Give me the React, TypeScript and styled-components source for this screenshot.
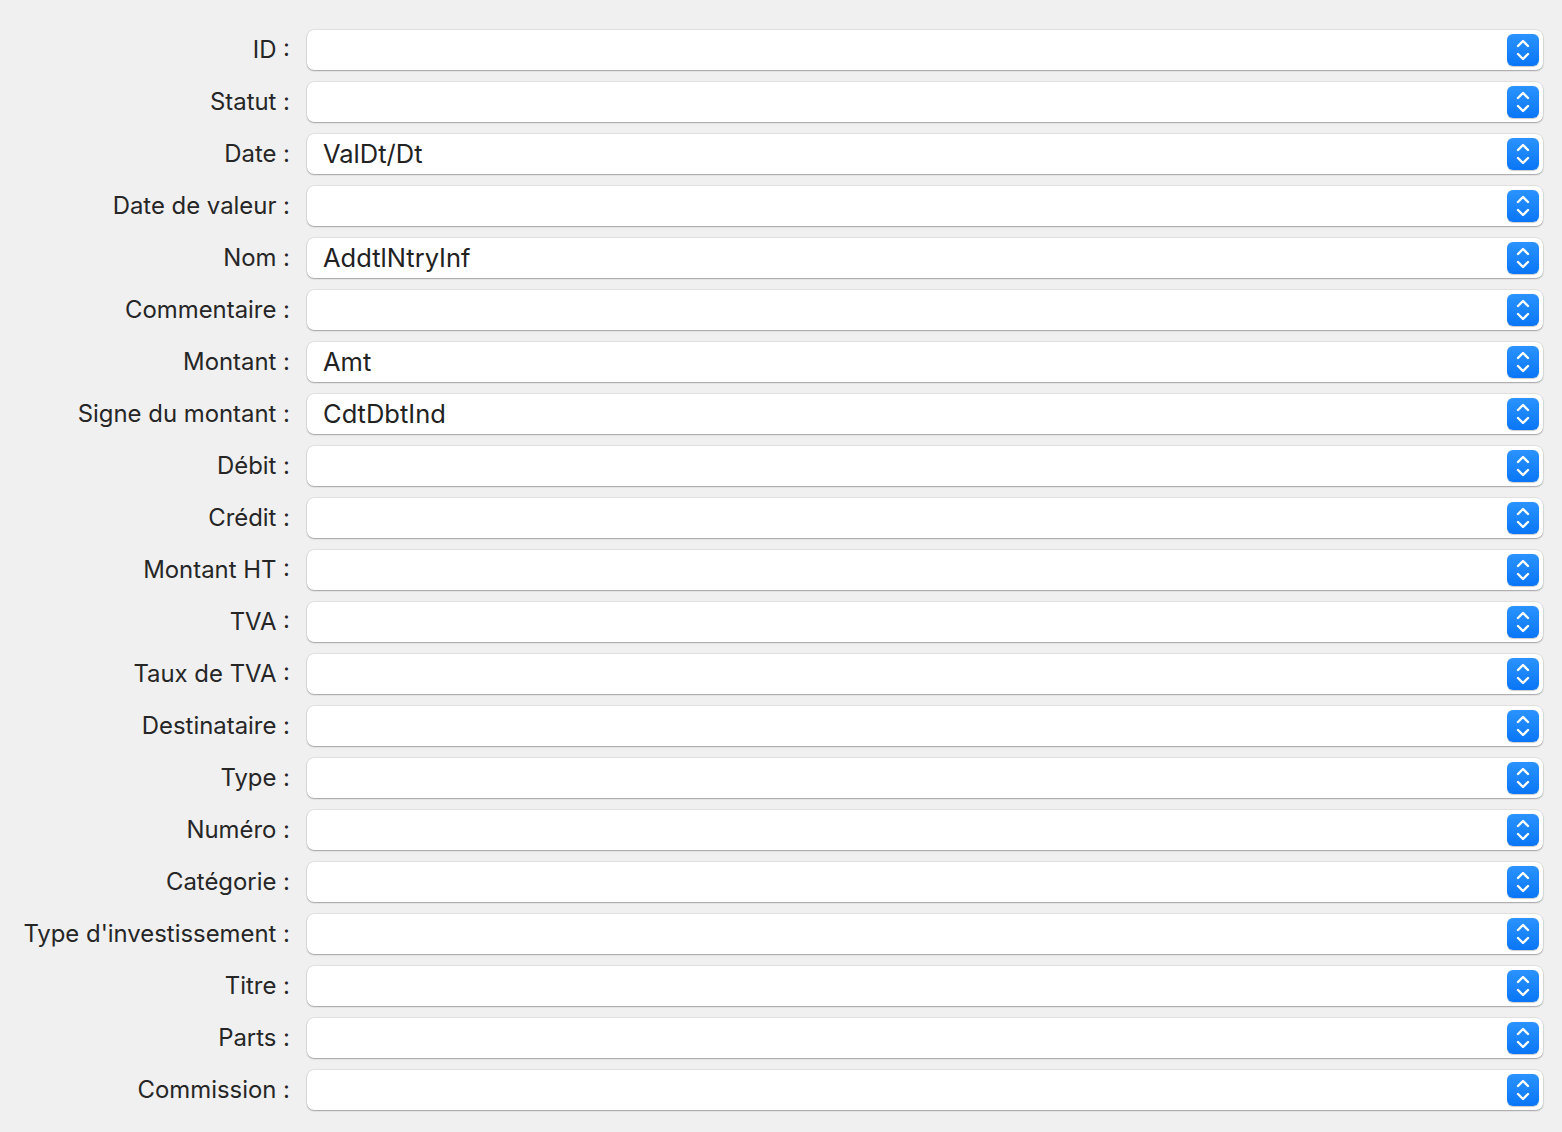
import React from "react";
import styled, { createGlobalStyle } from "styled-components";

const Global = createGlobalStyle`
  html, body { margin: 0; padding: 0; background: #f0f0f0; }
  body { font-family: Inter, "Noto Sans", sans-serif; -webkit-font-smoothing: antialiased; }
`;

const Form = styled.div`
  display: grid;
  grid-template-columns: 290px 1fr;
  column-gap: 17px;
  row-gap: 12px;
  padding: 30px 19px 22px 0;
`;

const Label = styled.div`
  height: 40px;
  display: flex;
  align-items: center;
  justify-content: flex-end;
  font-size: 23.9px;
  color: #262626;
  white-space: nowrap;
  padding-bottom: 1px;
  box-sizing: border-box;
`;

const Field = styled.div`
  height: 40px;
  box-sizing: border-box;
  background: #ffffff;
  border-radius: 7px;
  box-shadow: 0 0 0 0.5px rgba(0, 0, 0, 0.12), 0 1px 1.5px rgba(0, 0, 0, 0.28);
  display: flex;
  align-items: center;
  padding: 0 4px 0 16px;
`;

const Value = styled.div`
  flex: 1;
  font-size: 25.5px;
  color: #222222;
  white-space: nowrap;
  overflow: hidden;
  padding-bottom: 2px;
`;

const Stepper = styled.div`
  width: 32px;
  height: 32px;
  border-radius: 6px;
  background: linear-gradient(#2b93ff, #0a76f6);
  display: flex;
  align-items: center;
  justify-content: center;
  box-shadow: 0 0.5px 1px rgba(0, 0, 0, 0.2);
`;

const Chevrons = () => (
  <svg width="18" height="26" viewBox="0 0 18 26" fill="none">
    <path d="M4 9 L9 4 L14 9" stroke="#fff" strokeWidth="2.4" strokeLinecap="round" strokeLinejoin="round" />
    <path d="M4 17 L9 22 L14 17" stroke="#fff" strokeWidth="2.4" strokeLinecap="round" strokeLinejoin="round" />
  </svg>
);

const rows: [string, string][] = [
  ["ID :", ""],
  ["Statut :", ""],
  ["Date :", "ValDt/Dt"],
  ["Date de valeur :", ""],
  ["Nom :", "AddtlNtryInf"],
  ["Commentaire :", ""],
  ["Montant :", "Amt"],
  ["Signe du montant :", "CdtDbtInd"],
  ["Débit :", ""],
  ["Crédit :", ""],
  ["Montant HT :", ""],
  ["TVA :", ""],
  ["Taux de TVA :", ""],
  ["Destinataire :", ""],
  ["Type :", ""],
  ["Numéro :", ""],
  ["Catégorie :", ""],
  ["Type d'investissement :", ""],
  ["Titre :", ""],
  ["Parts :", ""],
  ["Commission :", ""],
];

export default function App() {
  return (
    <>
      <Global />
      <Form>
        {rows.map(([label, value]) => (
          <React.Fragment key={label}>
            <Label>{label}</Label>
            <Field>
              <Value>{value}</Value>
              <Stepper>
                <Chevrons />
              </Stepper>
            </Field>
          </React.Fragment>
        ))}
      </Form>
    </>
  );
}
